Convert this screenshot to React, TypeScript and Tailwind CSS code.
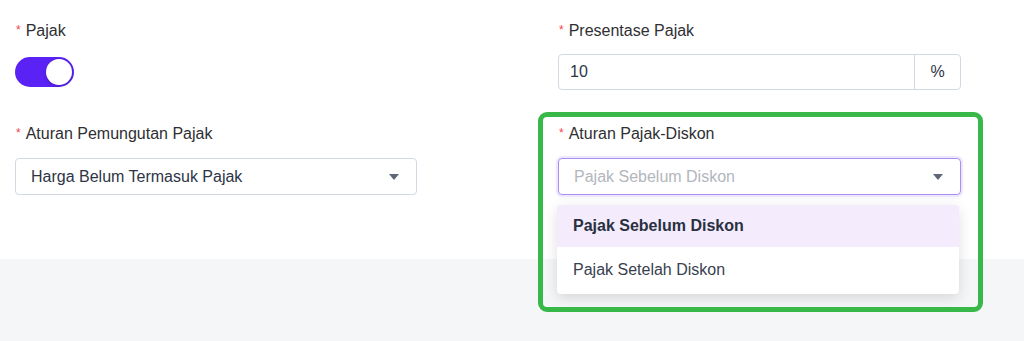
import { useState } from "react";

const FONT = "font-['Liberation_Sans','Helvetica_Neue',Arial,sans-serif]";

function Label({ text }: { text: string }) {
  return (
    <div className="flex items-center h-[20px] text-[16px] leading-[20px] text-[#2f2f33]">
      <span className="text-[#f0464c] text-[12px] mr-[5px] ml-[1px] -mt-[3px]">*</span>
      <span>{text}</span>
    </div>
  );
}

function Caret() {
  return (
    <svg width="12" height="8" viewBox="0 0 12 8" className="shrink-0">
      <path d="M1 1h10L6 7z" fill="#5d6777" />
    </svg>
  );
}

export default function App() {
  const [taxOn] = useState(true);

  return (
    <div className={`${FONT} relative w-[1024px] h-[341px] overflow-hidden bg-[#f5f6f8]`}>
      <div className="h-[259px] bg-white pl-[15px] pt-[21px] flex gap-[141px]">
        {/* left column */}
        <div className="w-[402px]">
          <Label text="Pajak" />
          <div className="mt-[13px] h-[36px] flex items-center">
            <div className={`w-[59px] h-[30px] rounded-full p-[2px] flex ${taxOn ? "bg-[#5b22f5] justify-end" : "bg-gray-300 justify-start"}`}>
              <div className="w-[26px] h-[26px] rounded-full bg-white shadow-[0_1px_3px_rgba(0,0,0,0.25)]" />
            </div>
          </div>

          <div className="mt-[34px]">
            <Label text="Aturan Pemungutan Pajak" />
          </div>
          <div className="mt-[14px] h-[37px] border border-[#d3d9e3] rounded-[4px] flex items-center pl-[15px] pr-[16px] justify-between">
            <span className="text-[16px] text-[#2d3546]">Harga Belum Termasuk Pajak</span>
            <Caret />
          </div>
        </div>

        {/* right column */}
        <div className="w-[403px] relative">
          <Label text="Presentase Pajak" />
          <div className="mt-[13px] h-[36px] border border-[#d3d9e3] rounded-[4px] flex">
            <div className="flex-1 flex items-center pl-[11px] text-[16px] text-[#2d3546]">10</div>
            <div className="w-[46px] border-l border-[#d3d9e3] flex items-center justify-center text-[16px] text-[#2d3546]">%</div>
          </div>

          <div className="mt-[34px]">
            <Label text="Aturan Pajak-Diskon" />
          </div>
          <div className="mt-[14px] h-[37px] border border-[#a98cf6] rounded-[4px] shadow-[0_0_0_2px_#eee8fd,0_2px_6px_rgba(0,0,0,0.06)] flex items-center pl-[15px] pr-[16px] justify-between">
            <span className="text-[16px] text-[#b3b6bd]">Pajak Sebelum Diskon</span>
            <Caret />
          </div>

          {/* dropdown menu */}
          <div className="absolute left-[-1px] top-[184px] w-[402px] bg-white rounded-[4px] shadow-[0_4px_14px_rgba(0,0,0,0.13)] overflow-hidden z-10">
            <div className="h-[42px] flex items-center pl-[16px] bg-[#f4ecfd] text-[16px] font-bold text-[#29303f]">Pajak Sebelum Diskon</div>
            <div className="h-[47px] flex items-center pl-[16px] text-[16px] text-[#39414f] pb-[2px]">Pajak Setelah Diskon</div>
          </div>
        </div>
      </div>

      {/* annotation highlight */}
      <div className="absolute left-[538px] top-[112px] w-[445px] h-[200px] border-[5px] border-[#39b84a] rounded-[9px] pointer-events-none z-20" />
    </div>
  );
}
